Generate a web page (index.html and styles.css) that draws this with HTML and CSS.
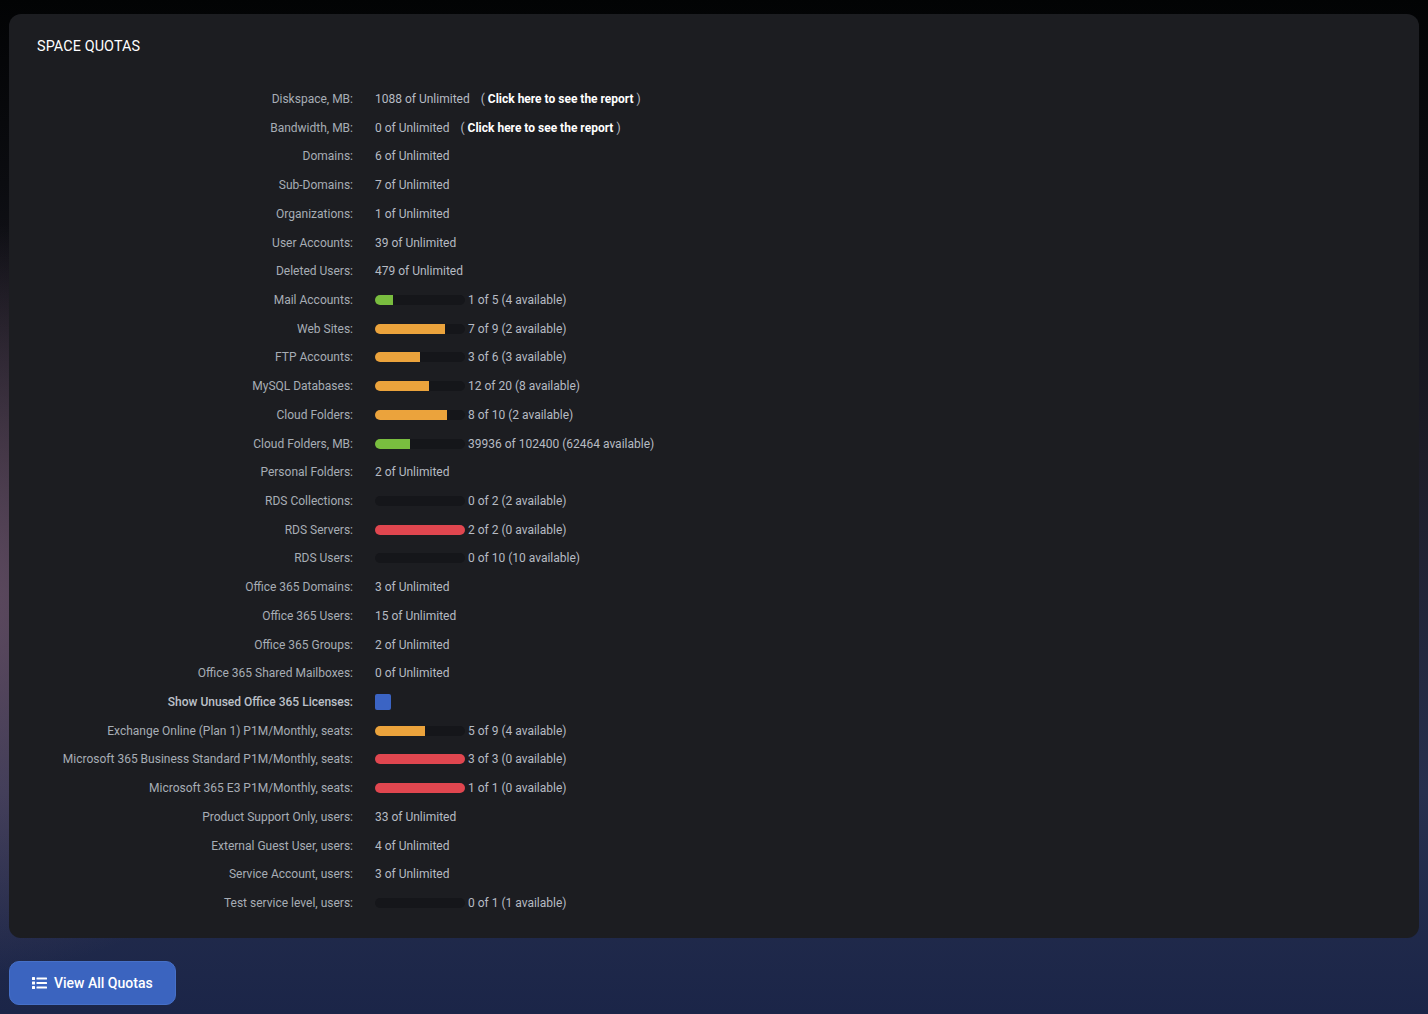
FILE: index.html
```html
<!DOCTYPE html>
<html lang="en">
<head>
  <meta charset="UTF-8" />
  <meta name="viewport" content="width=device-width, initial-scale=1.0"/>
  <title>Space Quotas</title>
  <link rel="stylesheet" href="styles.css">
</head>
<body>
  <div class="card">
    <div class="card-title">SPACE QUOTAS</div>

    <div class="quotas">
      <div class="label">Diskspace, MB:</div>
      <div class="value">1088 of Unlimited <span class="report">( <a href="#">Click here to see the report</a> )</span></div>

      <div class="label">Bandwidth, MB:</div>
      <div class="value">0 of Unlimited <span class="report">( <a href="#">Click here to see the report</a> )</span></div>

      <div class="label">Domains:</div>
      <div class="value">6 of Unlimited</div>

      <div class="label">Sub-Domains:</div>
      <div class="value">7 of Unlimited</div>

      <div class="label">Organizations:</div>
      <div class="value">1 of Unlimited</div>

      <div class="label">User Accounts:</div>
      <div class="value">39 of Unlimited</div>

      <div class="label">Deleted Users:</div>
      <div class="value">479 of Unlimited</div>

      <div class="label">Mail Accounts:</div>
      <div class="value"><span class="bar"><span class="fill green" style="width: 20%"></span></span>1 of 5 (4 available)</div>

      <div class="label">Web Sites:</div>
      <div class="value"><span class="bar"><span class="fill orange" style="width: 77.8%"></span></span>7 of 9 (2 available)</div>

      <div class="label">FTP Accounts:</div>
      <div class="value"><span class="bar"><span class="fill orange" style="width: 50%"></span></span>3 of 6 (3 available)</div>

      <div class="label">MySQL Databases:</div>
      <div class="value"><span class="bar"><span class="fill orange" style="width: 60%"></span></span>12 of 20 (8 available)</div>

      <div class="label">Cloud Folders:</div>
      <div class="value"><span class="bar"><span class="fill orange" style="width: 80%"></span></span>8 of 10 (2 available)</div>

      <div class="label">Cloud Folders, MB:</div>
      <div class="value"><span class="bar"><span class="fill green" style="width: 39%"></span></span>39936 of 102400 (62464 available)</div>

      <div class="label">Personal Folders:</div>
      <div class="value">2 of Unlimited</div>

      <div class="label">RDS Collections:</div>
      <div class="value"><span class="bar"></span>0 of 2 (2 available)</div>

      <div class="label">RDS Servers:</div>
      <div class="value"><span class="bar"><span class="fill red" style="width: 100%"></span></span>2 of 2 (0 available)</div>

      <div class="label">RDS Users:</div>
      <div class="value"><span class="bar"></span>0 of 10 (10 available)</div>

      <div class="label">Office 365 Domains:</div>
      <div class="value">3 of Unlimited</div>

      <div class="label">Office 365 Users:</div>
      <div class="value">15 of Unlimited</div>

      <div class="label">Office 365 Groups:</div>
      <div class="value">2 of Unlimited</div>

      <div class="label">Office 365 Shared Mailboxes:</div>
      <div class="value">0 of Unlimited</div>

      <div class="label strong">Show Unused Office 365 Licenses:</div>
      <div class="value"><span class="check"></span></div>

      <div class="label">Exchange Online (Plan 1) P1M/Monthly, seats:</div>
      <div class="value"><span class="bar"><span class="fill orange" style="width: 55.6%"></span></span>5 of 9 (4 available)</div>

      <div class="label">Microsoft 365 Business Standard P1M/Monthly, seats:</div>
      <div class="value"><span class="bar"><span class="fill red" style="width: 100%"></span></span>3 of 3 (0 available)</div>

      <div class="label">Microsoft 365 E3 P1M/Monthly, seats:</div>
      <div class="value"><span class="bar"><span class="fill red" style="width: 100%"></span></span>1 of 1 (0 available)</div>

      <div class="label">Product Support Only, users:</div>
      <div class="value">33 of Unlimited</div>

      <div class="label">External Guest User, users:</div>
      <div class="value">4 of Unlimited</div>

      <div class="label">Service Account, users:</div>
      <div class="value">3 of Unlimited</div>

      <div class="label">Test service level, users:</div>
      <div class="value"><span class="bar"></span>0 of 1 (1 available)</div>
    </div>
  </div>

  <button type="button" class="quotas-btn">
    <svg class="list-icon" width="15" height="12" viewBox="0 0 15 12">
      <rect x="0" y="0" width="3" height="3" rx="0.5" fill="#fff"/>
      <rect x="0" y="4.5" width="3" height="3" rx="0.5" fill="#fff"/>
      <rect x="0" y="9" width="3" height="3" rx="0.5" fill="#fff"/>
      <rect x="4.5" y="0.5" width="10.5" height="2" rx="0.5" fill="#fff"/>
      <rect x="4.5" y="5" width="10.5" height="2" rx="0.5" fill="#fff"/>
      <rect x="4.5" y="9.5" width="10.5" height="2" rx="0.5" fill="#fff"/>
    </svg>
    View All Quotas
  </button>
</body>
</html>
```

FILE: styles.css
```css
html {
  height: 100%;
}

body {
  font-family: Roboto, 'Liberation Sans', sans-serif;
  margin: 0;
  padding: 14px 9px 0;
  min-height: 100%;
  box-sizing: border-box;
  background:
    radial-gradient(ellipse 420px 380px at -60px 600px, rgba(120, 90, 112, 0.75), rgba(120, 90, 112, 0) 100%),
    linear-gradient(180deg, #020304 0%, #0b0c10 18%, #1d1d28 45%, #27304e 78%, #1b2548 100%);
  color: #b4b9c1;
}

.card {
  background: #1c1d21;
  border-radius: 12px;
  padding: 23px 28px 21px;
}

.card-title {
  color: #ffffff;
  font-size: 14.4px;
  font-weight: 400;
  letter-spacing: 0.1px;
  line-height: 20px;
  margin-bottom: 27.6px;
}

.quotas {
  display: grid;
  grid-template-columns: 316px 1fr;
  column-gap: 22px;
  grid-auto-rows: 28.72px;
  font-size: 12px;
}

.label,
.value {
  display: flex;
  align-items: center;
  white-space: nowrap;
}

.label {
  justify-content: flex-end;
  color: #a7adb5;
}

.label.strong {
  font-weight: 500;
  color: #bcc1c9;
}

.value {
  color: #b6bbc3;
}

.report {
  margin-left: 11px;
  color: #b6bbc3;
}

.report a {
  color: #ffffff;
  font-weight: 700;
  text-decoration: none;
}

.bar {
  display: inline-block;
  width: 90px;
  height: 10px;
  border-radius: 5px;
  background: #15161a;
  overflow: hidden;
  margin-right: 3px;
}

.fill {
  display: block;
  height: 100%;
}

.fill.green {
  background: #79bd3f;
}

.fill.orange {
  background: #eba33c;
}

.fill.red {
  background: #e0464f;
}

.check {
  display: inline-block;
  width: 16px;
  height: 16px;
  border-radius: 2px;
  background: #3b64c4;
}

.quotas-btn {
  margin-top: 23px;
  display: flex;
  align-items: center;
  gap: 7px;
  height: 44px;
  padding: 0 22px;
  font-family: Roboto, 'Liberation Sans', sans-serif;
  font-size: 14px;
  font-weight: 500;
  color: #ffffff;
  background: #3b64bf;
  border: 1px solid #4670c8;
  border-radius: 10px;
  cursor: pointer;
}

.quotas-btn:hover {
  background: #3359ad;
}
```
